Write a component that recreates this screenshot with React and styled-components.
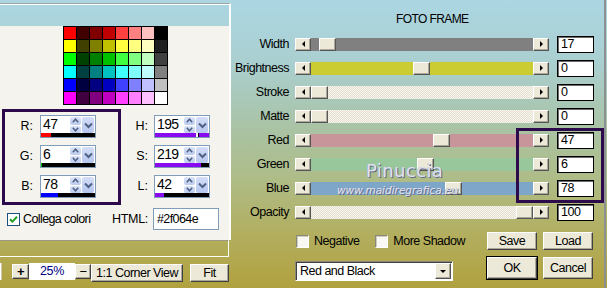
import React from 'react';
import styled, { createGlobalStyle } from 'styled-components';

const GlobalStyle = createGlobalStyle`
  html, body { margin: 0; padding: 0; }
  body {
    width: 607px;
    height: 288px;
    overflow: hidden;
    font-family: 'Liberation Sans', Arial, sans-serif;
    font-size: 12px;
    letter-spacing: -0.5px;
    color: #000;
    background: linear-gradient(180deg, #abd6e2 0%, #aacfd0 22%, #a9c4a9 42%, #aebc87 62%, #b2ae5e 82%, #b1a13e 100%);
  }
`;

const Screen = styled.div`
  display: flex;
  width: 607px;
  height: 288px;
`;

/* ---------- left: colour picker window ---------- */

const LeftWindow = styled.div`
  width: 231px;
  flex-shrink: 0;
  display: flex;
  flex-direction: column;
`;

const WinTop = styled.div`
  margin-top: 3px;
  height: 22px;
  border-top: 1px solid #98a6aa;
  border-right: 2px solid #fff;
  box-shadow: inset 0 1px 0 #fff;
`;

const ColorPanel = styled.div`
  height: 214px;
  box-sizing: border-box;
  background: #f4f3ee;
  border-right: 2px solid #fff;
`;

const Swatches = styled.div`
  display: grid;
  grid-template-columns: repeat(8, 12px);
  grid-auto-rows: 12px;
  gap: 1px;
  padding: 1px;
  width: max-content;
  margin-left: 63px;
  background: #000;
`;

const Swatch = styled.div`
  background: ${p => p.$c};
`;

const FieldsRow = styled.div`
  display: flex;
  margin: 4px 0 0 2px;
`;

const RgbBox = styled.div`
  width: 119px;
  box-sizing: border-box;
  border: 3px solid #2d0a4b;
  padding: 3px 0 4px;
  display: flex;
  flex-direction: column;
  gap: 7px;
`;

const HslCol = styled.div`
  padding-top: 6px;
  display: flex;
  flex-direction: column;
  gap: 7px;
`;

const FieldRow = styled.div`
  display: flex;
  align-items: center;
  height: 23px;
`;

const FieldLabel = styled.div`
  width: ${p => p.$w}px;
  box-sizing: border-box;
  padding-right: ${p => p.$pad}px;
  padding-bottom: 2px;
  text-align: right;
  font-size: 12.5px;
  letter-spacing: 0;
`;

const Spin = styled.div`
  width: 56px;
  height: 23px;
  box-sizing: border-box;
  border: 1px solid #7f9db9;
  background: #fff;
  display: flex;
  flex-direction: column;
`;

const SpinTop = styled.div`
  display: flex;
  height: 17px;
`;

const SpinValue = styled.div`
  flex: 1;
  padding: 1px 0 0 2px;
  font-size: 14px;
  letter-spacing: -0.6px;
  line-height: 15px;
`;

const SpinArrows = styled.div`
  width: 11px;
  margin-top: 1px;
  display: flex;
  flex-direction: column;
  gap: 1px;
`;

const SpinHalf = styled.div`
  flex: 1;
  border-radius: 2px;
  background: linear-gradient(180deg, #dbe4f8, #bccaef);
  display: flex;
  align-items: center;
  justify-content: center;
`;

const SpinDrop = styled.div`
  width: 12px;
  margin: 1px 1px 0 1px;
  border-radius: 2px;
  background: linear-gradient(180deg, #d4def7, #b6c6ef);
  display: flex;
  align-items: center;
  justify-content: center;
`;

const SpinBar = styled.div`
  position: relative;
  height: 4px;
  background: ${p => p.$bg};
`;

const BarFill = styled.div`
  height: 100%;
  background: ${p => p.$c};
`;

const BarMark = styled.div`
  position: absolute;
  top: 0;
  width: 2px;
  height: 100%;
  background: #fff;
  border-right: 1px solid #000;
`;

const LinkRow = styled.div`
  display: flex;
  align-items: center;
  height: 22px;
  margin-top: 3px;
`;

const LinkCheck = styled.label`
  width: 112px;
  box-sizing: border-box;
  padding-left: 7px;
  display: flex;
  align-items: center;
  gap: 3px;
  font-size: 12.5px;
  letter-spacing: -0.6px;
  white-space: nowrap;
`;

const XpBox = styled.span`
  width: 13px;
  height: 13px;
  box-sizing: border-box;
  border: 1px solid #1c5180;
  background: #fff;
  display: flex;
  align-items: center;
  justify-content: center;
`;

const HtmlLabel = styled.div`
  width: 41px;
  font-size: 12.5px;
  letter-spacing: -0.3px;
`;

const HtmlInput = styled.div`
  width: 66px;
  height: 22px;
  box-sizing: border-box;
  border: 1px solid #7f9db9;
  background: #fff;
  padding: 3px 0 0 3px;
  font-size: 12.5px;
  letter-spacing: -0.6px;
`;

const StatusFrame = styled.div`
  height: 15px;
  margin-right: 2px;
  border-top: 1px solid #9c9a80;
  border-right: 1px solid #fff;
  border-bottom: 1px solid #fff;
`;

const ZoomBar = styled.div`
  display: flex;
  align-items: flex-start;
  padding-top: 6px;
`;

const Sliver = styled.div`
  width: 1px;
  height: 17px;
  background: #fff;
  border-right: 1px solid #cfcab0;
  margin-right: 10px;
`;

const RaisedButton = styled.div`
  width: ${p => p.$w}px;
  height: ${p => p.$h}px;
  margin-top: ${p => p.$top || 0}px;
  margin-left: ${p => p.$ml || 0}px;
  box-sizing: border-box;
  background: #ece9d8;
  border-top: 1px solid #fff;
  border-left: 1px solid #fff;
  border-right: 1px solid #404040;
  border-bottom: 1px solid #404040;
  box-shadow: inset -1px -1px 0 #aca899${p => (p.$default ? ', 0 0 0 1px #000' : '')};
  display: flex;
  align-items: center;
  justify-content: center;
  font-size: ${p => p.$fs || 12.5}px;
  font-weight: ${p => (p.$bold ? 700 : 400)};
  white-space: nowrap;
  flex-shrink: 0;
`;

const ZoomField = styled.div`
  width: 46px;
  height: 17px;
  background: #fff;
  color: #000080;
  font-size: 12.5px;
  letter-spacing: -0.3px;
  text-align: center;
  line-height: 16px;
`;

/* ---------- right: Foto Frame dialog ---------- */

const Dialog = styled.div`
  flex: 1;
  margin-right: 1px;
  border-right: 2px solid #8c9090;
  display: flex;
  flex-direction: column;
`;

const Title = styled.div`
  height: 32px;
  box-sizing: border-box;
  padding: 12px 0 0 165px;
  line-height: 14px;
  font-size: 12px;
  letter-spacing: -0.6px;
`;

const SliderList = styled.div`
  position: relative;
  display: flex;
  flex-direction: column;
`;

const SliderRow = styled.div`
  display: flex;
  align-items: center;
  height: 24px;
`;

const SliderLabel = styled.div`
  width: 58px;
  margin-right: 6px;
  text-align: right;
  font-size: 12.5px;
  white-space: nowrap;
`;

const ScrollBar = styled.div`
  display: flex;
  width: 254px;
  height: 13px;
`;

const ArrowBtn = styled.div`
  width: 16px;
  height: 13px;
  box-sizing: border-box;
  background: #ece9d8;
  border-top: 1px solid #fff;
  border-left: 1px solid #fff;
  border-right: 1px solid #555;
  border-bottom: 1px solid #555;
  box-shadow: inset -1px -1px 0 #aca899;
  display: flex;
  align-items: center;
  justify-content: center;
  flex-shrink: 0;
`;

const Track = styled.div`
  position: relative;
  flex: 1;
  background: ${p => p.$c || 'repeating-conic-gradient(#f7f5ee 0 25%, #e3e0d2 0 50%) 0 0 / 2px 2px'};
`;

const Thumb = styled.div`
  position: absolute;
  top: 0;
  left: ${p => p.$pos}px;
  width: 17px;
  height: 13px;
  box-sizing: border-box;
  background: #ece9d8;
  border-top: 1px solid #fff;
  border-left: 1px solid #fff;
  border-right: 1px solid #555;
  border-bottom: 1px solid #555;
  box-shadow: inset -1px -1px 0 #aca899;
`;

const ValueBox = styled.div`
  width: 37px;
  height: 17px;
  margin-left: 8px;
  box-sizing: border-box;
  background: #fff;
  border: 1px solid #000;
  box-shadow: inset 1px 1px 0 #6a6a6a;
  padding-left: 3px;
  font-size: 12.5px;
  letter-spacing: -0.4px;
  line-height: 15px;
`;

const Highlight = styled.div`
  position: absolute;
  left: 285px;
  top: 96px;
  width: 88px;
  height: 75px;
  box-sizing: border-box;
  border: 3px solid #2d0a4b;
  pointer-events: none;
`;

const Watermark = styled.div`
  position: absolute;
  left: ${p => p.$x}px;
  top: ${p => p.$y}px;
  font-family: 'DejaVu Sans', sans-serif;
  font-size: ${p => p.$fs}px;
  font-style: ${p => (p.$italic ? 'italic' : 'normal')};
  letter-spacing: ${p => p.$ls || 0}px;
  color: #dfe1ef;
  text-shadow: 1px 1px 0 #646a88, -0.5px -0.5px 0 #a8aec4;
  white-space: nowrap;
  pointer-events: none;
`;

const BottomArea = styled.div`
  display: flex;
  margin: 8px 0 0 64px;
`;

const OptionsCol = styled.div`
  width: 158px;
  display: flex;
  flex-direction: column;
`;

const OptionsRow = styled.div`
  display: flex;
  align-items: center;
  height: 18px;
  padding-left: 1px;
  white-space: nowrap;
`;

const Option = styled.label`
  display: flex;
  align-items: center;
  gap: 5px;
  margin-right: ${p => p.$mr || 0}px;
  font-size: 12.5px;
  flex-shrink: 0;
`;

const ClassicBox = styled.span`
  width: 13px;
  height: 13px;
  box-sizing: border-box;
  background: #f9f8f2;
  border-top: 1px solid #8a887a;
  border-left: 1px solid #8a887a;
  border-right: 1px solid #fff;
  border-bottom: 1px solid #fff;
  box-shadow: inset 1px 1px 0 #cfccbc;
`;

const Select = styled.div`
  margin-top: 11px;
  height: 20px;
  box-sizing: border-box;
  background: #fff;
  border-top: 1px solid #8a887a;
  border-left: 1px solid #8a887a;
  border-right: 1px solid #fff;
  border-bottom: 1px solid #fff;
  box-shadow: inset 1px 1px 0 #404040;
  display: flex;
  align-items: center;
  padding: 0 1px 0 4px;
  font-size: 12.5px;
`;

const SelectText = styled.div`
  flex: 1;
`;

const SelectBtn = styled(ArrowBtn)`
  width: 16px;
  height: 16px;
`;

const ButtonsCol = styled.div`
  margin-left: 34px;
  display: flex;
  flex-direction: column;
  gap: 7px;
`;

const ButtonRow = styled.div`
  display: flex;
  gap: 6px;
`;

const Tri = ({ dir }) => {
  const pts = {
    left: '4,0 4,6 1,3',
    right: '1,0 1,6 4,3',
    down: '0,1 6,1 3,4',
  }[dir];
  return (
    <svg width={dir === 'down' ? 7 : 5} height={dir === 'down' ? 5 : 7} viewBox={dir === 'down' ? '0 0 7 5' : '0 0 5 7'}>
      <polygon points={pts} fill="#000" />
    </svg>
  );
};

const swatchRows = [
  ['#ff0000', '#400000', '#800000', '#c00000', '#ff4040', '#ff8080', '#ffc0c0', '#000000'],
  ['#ffff00', '#404000', '#808000', '#c0c000', '#ffff40', '#ffff80', '#ffffc0', '#202020'],
  ['#00ff00', '#004000', '#008000', '#00c000', '#40ff40', '#80ff80', '#c0ffc0', '#404040'],
  ['#00ffff', '#004040', '#008080', '#00c0c0', '#40ffff', '#80ffff', '#c0ffff', '#808080'],
  ['#0000ff', '#000040', '#000080', '#0000c0', '#4040ff', '#8080ff', '#c0c0ff', '#c0c0c0'],
  ['#ff00ff', '#400040', '#800080', '#c000c0', '#ff40ff', '#ff80ff', '#ffc0ff', '#ffffff'],
];

const rgb = [
  { k: 'R:', v: 47, c: '#ff0000' },
  { k: 'G:', v: 6, c: '#00c000' },
  { k: 'B:', v: 78, c: '#0000ff' },
];

const hsl = [
  { k: 'H:', v: 195, mark: true },
  { k: 'S:', v: 219 },
  { k: 'L:', v: 42 },
];

const sliders = [
  { label: 'Width', value: '17', track: '#808080', pos: 8 },
  { label: 'Brightness', value: '0', track: '#cbcb32', pos: 102 },
  { label: 'Stroke', value: '0', pos: 0 },
  { label: 'Matte', value: '0', pos: 0 },
  { label: 'Red', value: '47', track: '#c8969a', pos: 122 },
  { label: 'Green', value: '6', track: '#97c79a', pos: 106 },
  { label: 'Blue', value: '78', track: '#7ea6c9', pos: 134 },
  { label: 'Opacity', value: '100', pos: 205 },
];

const BAR_W = 54;
const HUE = '#8a0af0';

const SpinField = ({ value, bar }) => (
  <Spin>
    <SpinTop>
      <SpinValue>{value}</SpinValue>
      <SpinArrows>
        <SpinHalf>
          <svg width="7" height="5" viewBox="0 0 7 5">
            <path d="M0.8 4.2 L3.5 1.2 L6.2 4.2" fill="none" stroke="#4d6185" strokeWidth="1.6" />
          </svg>
        </SpinHalf>
        <SpinHalf>
          <svg width="7" height="5" viewBox="0 0 7 5">
            <path d="M0.8 0.8 L3.5 3.8 L6.2 0.8" fill="none" stroke="#4d6185" strokeWidth="1.6" />
          </svg>
        </SpinHalf>
      </SpinArrows>
      <SpinDrop>
        <svg width="9" height="7" viewBox="0 0 9 7">
          <path d="M1 1.5 L4.5 5 L8 1.5" fill="none" stroke="#4d6185" strokeWidth="2" />
        </svg>
      </SpinDrop>
    </SpinTop>
    {bar}
  </Spin>
);

export default function App() {
  return (
    <>
      <GlobalStyle />
      <Screen>
        <LeftWindow>
          <WinTop />
          <ColorPanel>
            <Swatches>
              {swatchRows.flat().map((c, i) => (
                <Swatch key={i} $c={c} />
              ))}
            </Swatches>

            <FieldsRow>
              <RgbBox>
                {rgb.map(f => (
                  <FieldRow key={f.k}>
                    <FieldLabel $w={35} $pad={7}>{f.k}</FieldLabel>
                    <SpinField
                      value={f.v}
                      bar={
                        <SpinBar $bg="#000">
                          <BarFill $c={f.c} style={{ width: Math.max(1, Math.round((f.v / 255) * BAR_W)) }} />
                        </SpinBar>
                      }
                    />
                  </FieldRow>
                ))}
              </RgbBox>
              <HslCol>
                {hsl.map(f => (
                  <FieldRow key={f.k}>
                    <FieldLabel $w={33} $pad={6}>{f.k}</FieldLabel>
                    <SpinField
                      value={f.v}
                      bar={
                        f.mark ? (
                          <SpinBar $bg={HUE}>
                            <BarMark style={{ left: Math.round((f.v / 255) * BAR_W) }} />
                          </SpinBar>
                        ) : (
                          <SpinBar $bg="#000">
                            <BarFill $c={HUE} style={{ width: Math.round((f.v / 255) * BAR_W) }} />
                          </SpinBar>
                        )
                      }
                    />
                  </FieldRow>
                ))}
              </HslCol>
            </FieldsRow>

            <LinkRow>
              <LinkCheck>
                <XpBox>
                  <svg width="9" height="9" viewBox="0 0 9 9">
                    <path d="M1 4.2 L3.4 6.6 L8 1.8" fill="none" stroke="#21a121" strokeWidth="2" />
                  </svg>
                </XpBox>
                Collega colori
              </LinkCheck>
              <HtmlLabel>HTML:</HtmlLabel>
              <HtmlInput>#2f064e</HtmlInput>
            </LinkRow>
          </ColorPanel>
          <StatusFrame />
          <ZoomBar>
            <Sliver />
            <RaisedButton $w={17} $h={15} $top={1} $fs={13} $bold>+</RaisedButton>
            <ZoomField>25%</ZoomField>
            <RaisedButton $w={16} $h={15} $top={1} $fs={13}>−</RaisedButton>
            <RaisedButton $w={92} $h={18} $top={1}>1:1 Corner View</RaisedButton>
            <RaisedButton $w={39} $h={18} $top={1} $ml={7}>Fit</RaisedButton>
          </ZoomBar>
        </LeftWindow>

        <Dialog>
          <Title>FOTO FRAME</Title>
          <SliderList>
            {sliders.map(s => (
              <SliderRow key={s.label}>
                <SliderLabel>{s.label}</SliderLabel>
                <ScrollBar>
                  <ArrowBtn><Tri dir="left" /></ArrowBtn>
                  <Track $c={s.track}>
                    <Thumb $pos={s.pos} />
                  </Track>
                  <ArrowBtn><Tri dir="right" /></ArrowBtn>
                </ScrollBar>
                <ValueBox>{s.value}</ValueBox>
              </SliderRow>
            ))}
            <Highlight />
            <Watermark $x={135} $y={128} $fs={18} $ls={0.4}>Pinuccia</Watermark>
            <Watermark $x={106} $y={152} $fs={10.5} $italic>www.maidiregrafica.eu</Watermark>
          </SliderList>

          <BottomArea>
            <OptionsCol>
              <OptionsRow>
                <Option $mr={16}><ClassicBox />Negative</Option>
                <Option><ClassicBox />More Shadow</Option>
              </OptionsRow>
              <Select>
                <SelectText>Red and Black</SelectText>
                <SelectBtn><Tri dir="down" /></SelectBtn>
              </Select>
            </OptionsCol>
            <ButtonsCol>
              <ButtonRow>
                <RaisedButton $w={50} $h={18}>Save</RaisedButton>
                <RaisedButton $w={50} $h={18}>Load</RaisedButton>
              </ButtonRow>
              <ButtonRow>
                <RaisedButton $w={50} $h={22} $default>OK</RaisedButton>
                <RaisedButton $w={50} $h={22}>Cancel</RaisedButton>
              </ButtonRow>
            </ButtonsCol>
          </BottomArea>
        </Dialog>
      </Screen>
    </>
  );
}
